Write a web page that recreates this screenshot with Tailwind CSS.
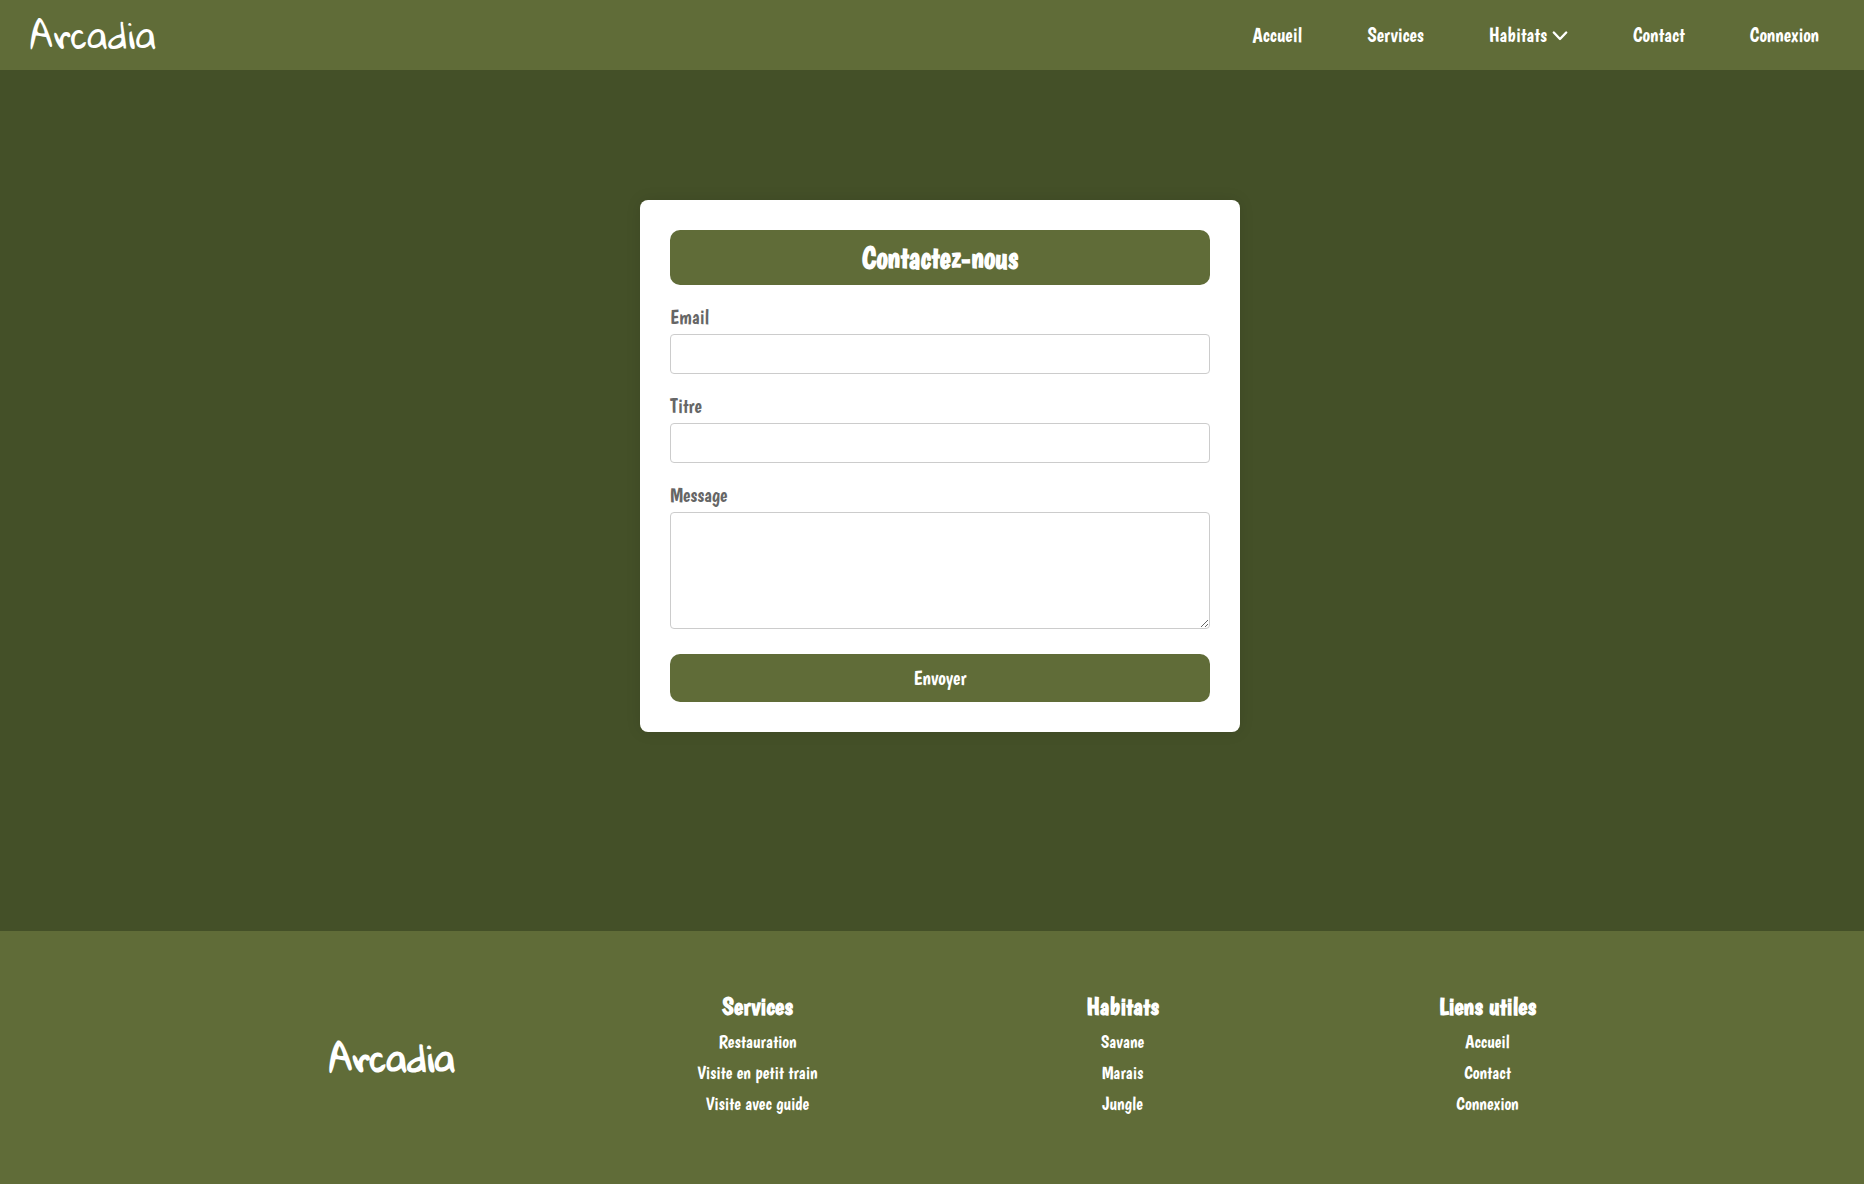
<!DOCTYPE html>
<html lang="fr">
<head>
<meta charset="utf-8">
<title>Arcadia - Contact</title>
<script src="https://cdn.jsdelivr.net/npm/@tailwindcss/browser@4"></script>
</head>
<body class="min-h-screen flex flex-col bg-[#445028] text-white font-['Boogaloo','Roboto',sans-serif]">
<header class="flex h-[70px] items-center justify-between bg-[#606c38] pl-[30px] pr-[45px]">
  <a href="#" class="font-['Gloria_Hallelujah',cursive] text-[35px] leading-[70px]">Arcadia</a>
  <nav>
    <ul class="flex gap-[65px] text-xl leading-[25px]">
      <li><a href="#">Accueil</a></li>
      <li><a href="#">Services</a></li>
      <li><a href="#" class="flex items-center gap-[5px]">Habitats
        <svg class="size-4" viewBox="0 0 16 16" fill="none" stroke="currentColor" stroke-width="2.400" stroke-linecap="round" stroke-linejoin="round" aria-hidden="true"><path d="M1.800 5.500 8 12l6.200-6.500"/></svg></a></li>
      <li><a href="#">Contact</a></li>
      <li><a href="#">Connexion</a></li>
    </ul>
  </nav>
</header>
<main class="pt-[130px] pb-[199px] pl-4">
  <form class="mx-auto flex max-w-[600px] flex-col gap-5 rounded-lg bg-white p-[30px] shadow-[0_0_15px_rgba(0,0,0,0.1)]">
    <h1 class="rounded-[10px] bg-[#606c38] py-[10px] text-center text-[30px] font-bold leading-[35px]">Contactez-nous</h1>
    <div class="flex flex-col gap-[5px]">
      <label for="email" class="text-xl leading-6 text-[#666]">Email</label>
      <input id="email" type="email" class="h-10 rounded border border-[#ccc] bg-white px-2 text-base text-[#333]">
    </div>
    <div class="flex flex-col gap-[5px]">
      <label for="titre" class="text-xl leading-6 text-[#666]">Titre</label>
      <input id="titre" type="text" class="h-10 rounded border border-[#ccc] bg-white px-2 text-base text-[#333]">
    </div>
    <div class="flex flex-col gap-[5px]">
      <label for="message" class="text-xl leading-6 text-[#666]">Message</label>
      <textarea id="message" class="h-[117px] resize rounded border border-[#ccc] bg-white p-2 text-base text-[#333]"></textarea>
    </div>
    <button type="submit" class="mt-[5px] rounded-[10px] bg-[#606c38] py-3 text-xl leading-6">Envoyer</button>
  </form>
</main>
<footer class="grow bg-[#606c38] py-[57px] pl-4">
  <div class="mx-auto grid max-w-[1460px] grid-cols-4 items-center text-center">
    <a href="#" class="font-['Gloria_Hallelujah',cursive] text-[35px] font-bold leading-[70px]">Arcadia</a>
    <section class="pb-2">
      <h2 class="mb-[2px] text-[25px] font-bold leading-9">Services</h2>
      <ul class="text-lg leading-[31px]">
        <li><a href="#">Restauration</a></li>
        <li><a href="#">Visite en petit train</a></li>
        <li><a href="#">Visite avec guide</a></li>
      </ul>
    </section>
    <section class="pb-2">
      <h2 class="mb-[2px] text-[25px] font-bold leading-9">Habitats</h2>
      <ul class="text-lg leading-[31px]">
        <li><a href="#">Savane</a></li>
        <li><a href="#">Marais</a></li>
        <li><a href="#">Jungle</a></li>
      </ul>
    </section>
    <section class="pb-2">
      <h2 class="mb-[2px] text-[25px] font-bold leading-9">Liens utiles</h2>
      <ul class="text-lg leading-[31px]">
        <li><a href="#">Accueil</a></li>
        <li><a href="#">Contact</a></li>
        <li><a href="#">Connexion</a></li>
      </ul>
    </section>
  </div>
</footer>
</body>
</html>
